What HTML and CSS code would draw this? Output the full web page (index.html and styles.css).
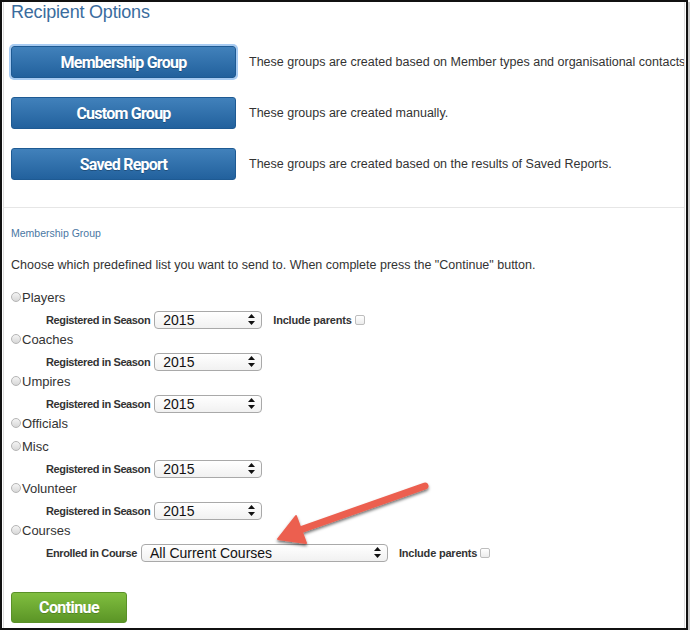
FILE: index.html
```html
<!doctype html>
<html lang="en">
  <head>
    <meta charset="UTF-8" />
    <meta name="viewport" content="width=device-width, initial-scale=1.0" />
    <title>Recipient Options</title>
    <link rel="stylesheet" href="styles.css">
  </head>
  <body>
    <div class="frame">
      <main class="panel">
        <h1 class="page-title">Recipient Options</h1>

        <div class="group-list">
          <div class="group-row">
            <button class="group-btn is-focused">Membership Group</button>
            <p class="group-desc">These groups are created based on Member types and organisational contacts</p>
          </div>
          <div class="group-row">
            <button class="group-btn">Custom Group</button>
            <p class="group-desc">These groups are created manually.</p>
          </div>
          <div class="group-row">
            <button class="group-btn">Saved Report</button>
            <p class="group-desc">These groups are created based on the results of Saved Reports.</p>
          </div>
        </div>

        <hr class="divider" />

        <section class="section">
          <h2 class="section-title">Membership Group</h2>
          <p class="intro">Choose which predefined list you want to send to. When complete press the "Continue" button.</p>

          <ul class="options">
            <li class="option">
              <label class="option-radio"><span class="radio"></span>Players</label>
              <div class="option-filter">
                <span class="filter-label">Registered in Season</span>
                <div class="select season"><span>2015</span><svg class="select-arrows" width="7" height="11" viewBox="0 0 7 11"><path d="M3.5 0 L7 4 H0 Z M0 7 H7 L3.5 11 Z" fill="#111"/></svg></div>
                <span class="filter-label parents">Include parents</span>
                <span class="checkbox"></span>
              </div>
            </li>
            <li class="option">
              <label class="option-radio"><span class="radio"></span>Coaches</label>
              <div class="option-filter">
                <span class="filter-label">Registered in Season</span>
                <div class="select season"><span>2015</span><svg class="select-arrows" width="7" height="11" viewBox="0 0 7 11"><path d="M3.5 0 L7 4 H0 Z M0 7 H7 L3.5 11 Z" fill="#111"/></svg></div>
              </div>
            </li>
            <li class="option">
              <label class="option-radio"><span class="radio"></span>Umpires</label>
              <div class="option-filter">
                <span class="filter-label">Registered in Season</span>
                <div class="select season"><span>2015</span><svg class="select-arrows" width="7" height="11" viewBox="0 0 7 11"><path d="M3.5 0 L7 4 H0 Z M0 7 H7 L3.5 11 Z" fill="#111"/></svg></div>
              </div>
            </li>
            <li class="option">
              <label class="option-radio"><span class="radio"></span>Officials</label>
            </li>
            <li class="option">
              <label class="option-radio"><span class="radio"></span>Misc</label>
              <div class="option-filter">
                <span class="filter-label">Registered in Season</span>
                <div class="select season"><span>2015</span><svg class="select-arrows" width="7" height="11" viewBox="0 0 7 11"><path d="M3.5 0 L7 4 H0 Z M0 7 H7 L3.5 11 Z" fill="#111"/></svg></div>
              </div>
            </li>
            <li class="option">
              <label class="option-radio"><span class="radio"></span>Volunteer</label>
              <div class="option-filter">
                <span class="filter-label">Registered in Season</span>
                <div class="select season"><span>2015</span><svg class="select-arrows" width="7" height="11" viewBox="0 0 7 11"><path d="M3.5 0 L7 4 H0 Z M0 7 H7 L3.5 11 Z" fill="#111"/></svg></div>
              </div>
            </li>
            <li class="option">
              <label class="option-radio"><span class="radio"></span>Courses</label>
              <div class="option-filter">
                <span class="filter-label">Enrolled in Course</span>
                <div class="select course"><span>All Current Courses</span><svg class="select-arrows" width="7" height="11" viewBox="0 0 7 11"><path d="M3.5 0 L7 4 H0 Z M0 7 H7 L3.5 11 Z" fill="#111"/></svg></div>
                <span class="filter-label parents">Include parents</span>
                <span class="checkbox"></span>
              </div>
            </li>
          </ul>

          <button class="continue-btn">Continue</button>
        </section>
      </main>

      <!-- callout arrow drawn over the form -->
      <svg class="callout" width="691" height="631" viewBox="0 0 691 631">
        <defs>
          <filter id="arrowShadow" x="-20%" y="-50%" width="140%" height="200%">
            <feDropShadow dx="0" dy="2" stdDeviation="1.6" flood-color="#000" flood-opacity="0.55"/>
          </filter>
        </defs>
        <g filter="url(#arrowShadow)" fill="#ec5f4f" stroke="#ec5f4f">
          <line x1="425" y1="486" x2="300" y2="530" stroke-width="7" stroke-linecap="round"/>
          <path d="M278 539 L296 516 L306 543 Z" stroke-width="2" stroke-linejoin="round"/>
        </g>
      </svg>
    </div>
  </body>
</html>
```

FILE: styles.css
```css
* {
  margin: 0;
  padding: 0;
  box-sizing: border-box;
}

body {
  font-family: "Liberation Sans", Arial, sans-serif;
  background: #fff;
  color: #333;
}

.frame {
  position: relative;
  width: 688px;
  height: 630px;
  border: 2px solid #111;
  padding: 0 1px;
  box-shadow: 2px 2px 0 #c8c8c8;
}

.panel {
  height: 100%;
  border-left: 1px solid #dcdcdc;
  border-right: 1px solid #dcdcdc;
  padding: 0 0 0 7px;
  overflow: hidden;
}

.page-title {
  font-size: 18px;
  font-weight: normal;
  line-height: 20px;
  letter-spacing: -0.2px;
  color: #3a6c9e;
  white-space: nowrap;
}

.group-list {
  display: flex;
  flex-direction: column;
  gap: 19px;
  margin-top: 24px;
}

.group-row {
  display: flex;
  align-items: center;
  gap: 13px;
  white-space: nowrap;
}

.group-btn {
  width: 225px;
  height: 32px;
  flex-shrink: 0;
  border: 1px solid #1e5a93;
  border-radius: 3px;
  background: linear-gradient(#4181bb, #22619d);
  color: #fff;
  font-family: Roboto, "Liberation Sans", sans-serif;
  font-size: 16px;
  font-weight: bold;
  letter-spacing: -0.75px;
  text-shadow: 0 1px 0 rgba(0, 0, 0, 0.25);
}

.group-btn.is-focused {
  box-shadow: 0 0 0 2px #a7cbf2;
}

.group-desc {
  font-size: 12.5px;
  color: #333;
}

.divider {
  border: none;
  border-top: 1px solid #e6e6e6;
  margin: 27px 0 0 -7px;
}

.section-title {
  font-size: 10.5px;
  font-weight: normal;
  line-height: 14px;
  color: #4a77a3;
  margin-top: 18px;
}

.intro {
  font-size: 12.5px;
  line-height: 16px;
  margin-top: 17px;
  white-space: nowrap;
}

.options {
  list-style: none;
  margin-top: 14px;
}

.option-radio {
  display: flex;
  align-items: center;
  height: 23px;
  padding-bottom: 3px;
  font-size: 13px;
  color: #333;
}

.radio {
  width: 10px;
  height: 10px;
  margin-right: 1px;
  border: 1px solid #b5b5b5;
  border-radius: 50%;
  background: linear-gradient(#f4f4f4, #d8d8d8);
}

.option-filter {
  display: flex;
  align-items: center;
  height: 19px;
  padding-left: 35px;
}

.filter-label {
  font-size: 11px;
  font-weight: bold;
  color: #333;
  letter-spacing: -0.38px;
  margin-right: 4px;
  white-space: nowrap;
}

.filter-label.parents {
  margin-left: 11px;
  margin-right: 3px;
  letter-spacing: -0.2px;
}

.select {
  display: flex;
  align-items: center;
  justify-content: space-between;
  height: 18px;
  padding: 0 6px 0 8px;
  border: 1px solid #a9a9a9;
  border-radius: 4px;
  background: linear-gradient(#fff, #f1f1f1);
  font-size: 14px;
  color: #111;
}

.select.season {
  width: 108px;
}

.select.course {
  width: 247px;
}

.checkbox {
  width: 10px;
  height: 10px;
  border: 1px solid #bdbdbd;
  border-radius: 2px;
  background: linear-gradient(#fff, #ececec);
}

.continue-btn {
  width: 116px;
  height: 31px;
  margin-top: 30px;
  border: 1px solid #5a9128;
  border-radius: 3px;
  background: linear-gradient(#80be3f, #5b9526);
  color: #fff;
  font-family: Roboto, "Liberation Sans", sans-serif;
  font-size: 16px;
  font-weight: bold;
  letter-spacing: -0.6px;
  text-shadow: 0 1px 0 rgba(0, 0, 0, 0.2);
}

.callout {
  position: absolute;
  top: -2px;
  left: -2px;
  pointer-events: none;
}
```
